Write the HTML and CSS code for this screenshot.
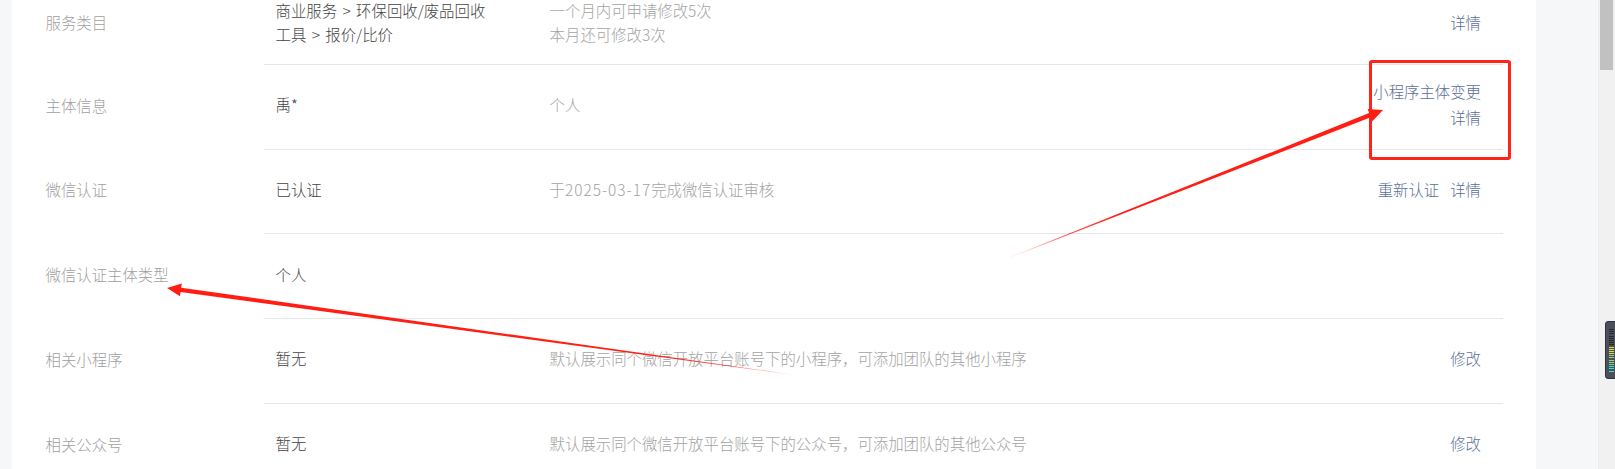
FILE: index.html
```html
<!DOCTYPE html>
<html lang="zh-CN">
<head>
<meta charset="UTF-8">
<meta name="viewport" content="width=device-width, initial-scale=1.0">
<title>基本设置</title>
<link rel="stylesheet" href="styles.css">
</head>
<body>
<div class="page">
    <div class="main">
        <div class="card">
            <div class="table">
                <div class="row row-first">
                    <div class="label">服务类目</div>
                    <div class="cells">
                        <div class="value">商业服务 &gt; 环保回收/废品回收<br>工具 &gt; 报价/比价</div>
                        <div class="desc">一个月内可申请修改5次<br>本月还可修改3次</div>
                        <div class="actions"><a class="link">详情</a></div>
                    </div>
                </div>
                <div class="row">
                    <div class="label">主体信息</div>
                    <div class="cells">
                        <div class="value">禹*</div>
                        <div class="desc">个人</div>
                        <div class="actions stack"><a class="link">小程序主体变更</a><a class="link">详情</a></div>
                    </div>
                </div>
                <div class="row">
                    <div class="label">微信认证</div>
                    <div class="cells">
                        <div class="value">已认证</div>
                        <div class="desc">于<span class="num">2025-03-17</span>完成微信认证审核</div>
                        <div class="actions"><a class="link">重新认证</a><a class="link">详情</a></div>
                    </div>
                </div>
                <div class="row">
                    <div class="label">微信认证主体类型</div>
                    <div class="cells">
                        <div class="value">个人</div>
                        <div class="desc"></div>
                        <div class="actions"></div>
                    </div>
                </div>
                <div class="row">
                    <div class="label">相关小程序</div>
                    <div class="cells">
                        <div class="value">暂无</div>
                        <div class="desc">默认展示同个微信开放平台账号下的小程序，可添加团队的其他小程序</div>
                        <div class="actions"><a class="link">修改</a></div>
                    </div>
                </div>
                <div class="row">
                    <div class="label">相关公众号</div>
                    <div class="cells">
                        <div class="value">暂无</div>
                        <div class="desc">默认展示同个微信开放平台账号下的公众号，可添加团队的其他公众号</div>
                        <div class="actions"><a class="link">修改</a></div>
                    </div>
                </div>
            </div>
        </div>
    </div>
    <div class="scrollbar">
        <div class="thumb"></div>
        <div class="meter">
            <i class="bar off"></i><i class="bar off"></i><i class="bar off"></i><i class="bar off"></i>
            <i class="bar off"></i><i class="bar off"></i><i class="bar off"></i><i class="bar off"></i>
            <i class="bar yellow"></i><i class="bar yellow"></i><i class="bar yellow"></i><i class="bar yellow"></i>
            <i class="bar green"></i><i class="bar green"></i><i class="bar green"></i><i class="bar green"></i>
            <i class="bar cyan"></i><i class="bar cyan"></i><i class="bar cyan"></i><i class="bar cyan"></i>
        </div>
    </div>

    <!-- annotations drawn over the screenshot -->
    <div class="mark-box"></div>
    <svg class="marks" width="1615" height="469" viewBox="0 0 1615 469">
        <defs>
            <linearGradient id="fade1" gradientUnits="userSpaceOnUse" x1="1006" y1="259" x2="1383" y2="110">
                <stop offset="0" stop-color="#ff1d14" stop-opacity="0"/>
                <stop offset="0.14" stop-color="#ff1d14" stop-opacity="0.7"/>
                <stop offset="0.3" stop-color="#ff1d14" stop-opacity="1"/>
            </linearGradient>
            <linearGradient id="fade2" gradientUnits="userSpaceOnUse" x1="795" y1="375" x2="167" y2="288">
                <stop offset="0" stop-color="#ff1d14" stop-opacity="0"/>
                <stop offset="0.1" stop-color="#ff1d14" stop-opacity="0.7"/>
                <stop offset="0.22" stop-color="#ff1d14" stop-opacity="1"/>
            </linearGradient>
        </defs>
        <polygon fill="url(#fade1)" points="1006.07,259.19 1370.79,117.20 1372.37,121.20 1383,110 1367.59,109.11 1369.17,113.10 1005.93,258.81"/>
        <polygon fill="url(#fade2)" points="795.03,374.80 181.17,287.74 181.76,283.48 167,288 179.98,296.36 180.57,292.10 794.97,375.20"/>
    </svg>
</div>
</body>
</html>
```

FILE: styles.css
```css
body {
    margin: 0;
    font-family: "Noto Sans CJK SC", "Noto Sans", sans-serif;
    font-size: 15.4px;
    font-weight: 300;
    line-height: 24px;
    color: #353535;
}
.page {
    position: relative;
    display: flex;
    width: 1615px;
    height: 469px;
    overflow: hidden;
    background-color: #f6f7f9;
}
.main {
    flex: 1;
    padding-left: 12px;
    padding-right: 62px;
}
.card {
    display: flow-root;
    height: 100%;
    background-color: #fff;
    padding-right: 33px;
}
.table {
    margin-top: -20px;
}
.row {
    display: flex;
    height: 84.75px;
}
.label {
    width: 252px;
    padding-left: 33.5px;
    padding-bottom: 5px;
    box-sizing: border-box;
    display: flex;
    align-items: center;
    color: #9f9f9f;
}
.cells {
    flex: 1;
    display: flex;
    align-items: center;
    border-bottom: 1px solid #e7e7eb;
    padding-right: 22px;
    padding-bottom: 5px;
}
.row-first .label,
.row-first .cells {
    padding-bottom: 0;
}
.value {
    width: 285.6px;
    padding-left: 11.5px;
    box-sizing: border-box;
    color: #444;
    word-spacing: 2px;
}
.desc {
    flex: 1;
    color: #a3a3a3;
}
.num {
    letter-spacing: 1px;
}
.actions {
    text-align: right;
}
.link {
    color: #5d6f99;
    text-decoration: none;
    cursor: pointer;
}
.link + .link {
    margin-left: 11px;
}
.stack {
    display: flex;
    flex-direction: column;
    align-items: flex-end;
    gap: 2px;
}
.stack .link + .link {
    margin-left: 0;
}
.scrollbar {
    position: relative;
    width: 17px;
    background-color: #f1f1f1;
    border-left: 1px solid #ececec;
    box-sizing: border-box;
}
.thumb {
    margin-left: 1px;
    width: 13px;
    height: 70px;
    background-color: #c1c1c1;
}
.meter {
    position: absolute;
    left: 6px;
    top: 321px;
    width: 14px;
    height: 58px;
    box-sizing: border-box;
    padding: 7px 0 0 3px;
    background-color: #4b4f5b;
    border: 1px solid #30323a;
    border-radius: 3px;
    display: flex;
    flex-direction: column;
    gap: 1.2px;
}
.bar {
    display: block;
    width: 5px;
    height: 1px;
}
.bar.off {
    background-color: #26282e;
}
.bar.yellow {
    background-color: #e8d84a;
}
.bar.green {
    background-color: #8fdc6a;
}
.bar.cyan {
    background-color: #3fe0c8;
}
.mark-box {
    position: absolute;
    left: 1369px;
    top: 60px;
    width: 142px;
    height: 100px;
    box-sizing: border-box;
    border: 3px solid #fe2418;
    border-radius: 3px;
}
.marks {
    position: absolute;
    left: 0;
    top: 0;
    pointer-events: none;
}
```
